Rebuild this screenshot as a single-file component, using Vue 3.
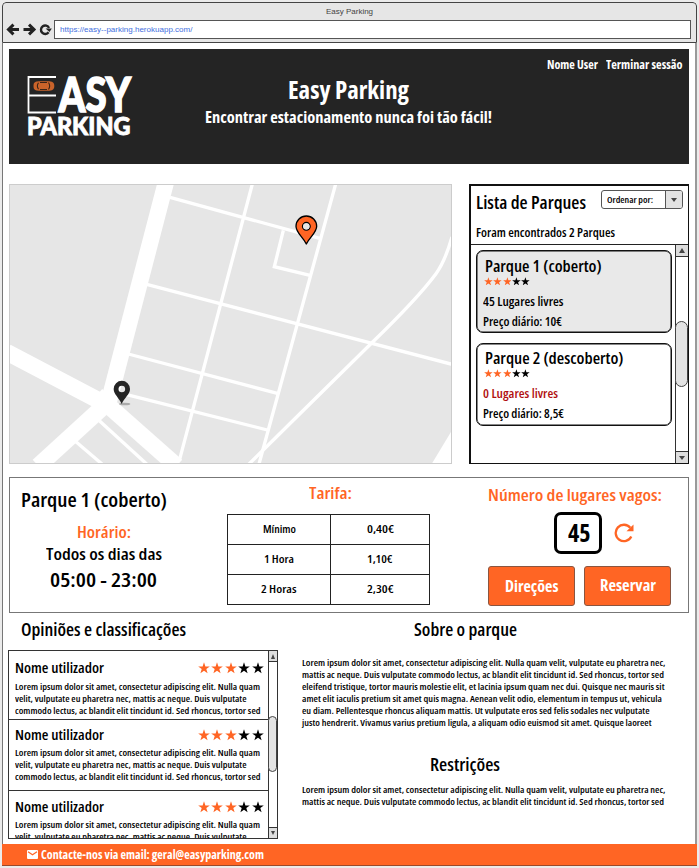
<script setup>
// Sets an element's text to a given measure by condensing its glyphs.
const vFit = {
  mounted(el, { value }) {
    const natural = el.getBoundingClientRect().width
    el.style.transform = `scaleX(${value / natural})`
    el.style.marginRight = `${value - natural}px`
  },
}

const star = 'M6 0.3 7.4 4.4 11.8 4.5 8.3 7.1 9.6 11.3 6 8.8 2.4 11.3 3.7 7.1 0.2 4.5 4.6 4.4Z'

const parks = [
  { name: 'Parque 1 (coberto)', nw: 116.5, free: '45 Lugares livres', fw: 80.5, price: 'Preço diário: 10€', pw: 79, active: true },
  { name: 'Parque 2 (descoberto)', nw: 138.5, free: '0 Lugares livres', fw: 75, price: 'Preço diário: 8,5€', pw: 81, full: true },
]

const fares = [
  ['Mínimo', 33, '0,40€', 27],
  ['1 Hora', 30, '1,10€', 25.5],
  ['2 Horas', 35.5, '2,30€', 26.5],
]

const reviewLines = [
  ['Lorem ipsum dolor sit amet, consectetur adipiscing elit. Nulla quam', 245],
  ['velit, vulputate eu pharetra nec, mattis ac neque. Duis vulputate', 231.5],
  ['commodo lectus, ac blandit elit tincidunt id. Sed rhoncus, tortor sed', 245.5],
]

const about = [
  ['Lorem ipsum dolor sit amet, consectetur adipiscing elit. Nulla quam velit, vulputate eu pharetra nec,', 363.5],
  ['mattis ac neque. Duis vulputate commodo lectus, ac blandit elit tincidunt id. Sed rhoncus, tortor sed', 362],
  ['eleifend tristique, tortor mauris molestie elit, et lacinia ipsum quam nec dui. Quisque nec mauris sit', 362.5],
  ['amet elit iaculis pretium sit amet quis magna. Aenean velit odio, elementum in tempus ut, vehicula', 360],
  ['eu diam. Pellentesque rhoncus aliquam mattis. Ut vulputate eros sed felis sodales nec vulputate', 347.5],
  ['justo hendrerit. Vivamus varius pretium ligula, a aliquam odio euismod sit amet. Quisque laoreet', 349.5],
]
</script>

<template>
  <div class="window">
    <div class="chrome">
      <div class="tab-title">Easy Parking</div>
      <div class="toolbar">
        <svg class="nav" width="46" height="14" viewBox="0 0 46 14" fill="none" stroke="#222" stroke-width="3">
          <path d="M13 6.500H3M7.500 1.700 2.500 6.500 7.500 11.300" />
          <path d="M17.500 6.500H27M23 1.700 28 6.500 23 11.300" />
          <path d="M42.600 9.200A4.200 4.200 0 1 1 43 5" stroke-width="2.400" />
          <path d="M39.600 5.500H45.800L43.500 9Z" fill="#222" stroke="none" />
        </svg>
        <div class="url"><span v-fit="132.5">https://easy--parking.herokuapp.com/</span></div>
      </div>
    </div>

    <div class="page">
      <header class="hero">
        <svg class="logo" width="108" height="64" viewBox="0 0 108 64">
          <path d="M30 2H2.500V37.500H30M2.500 20.500H30" fill="none" stroke="#fff" stroke-width="1.800" />
          <g fill="#c9632a">
            <path d="M12.500 6.500C8.500 6.300 7.500 8 7.500 11S8.500 15.700 12.500 15.500Z" />
            <path d="M23.500 6.500C27 6.300 28.300 8 28.300 11S27 15.700 23.500 15.500Z" />
            <rect x="11" y="6.200" width="14" height="9.600" rx="2" />
          </g>
          <path d="M12.500 7.800Q10.200 11 12.500 14.200M22.500 7.500Q24.800 11 22.500 14.500M14 7.500H21M14 14.500H21" fill="none" stroke="#3a2417" stroke-width="1.100" />
          <text x="32.500" y="37" font-size="48" textLength="72.500" lengthAdjust="spacingAndGlyphs" stroke-width="1.600">ASY</text>
          <text x="1" y="60" font-size="25.500" textLength="103.500" lengthAdjust="spacingAndGlyphs" stroke-width="0.900">PARKING</text>
        </svg>
        <div class="hero-text">
          <h1 v-fit="121">Easy Parking</h1>
          <p v-fit="287">Encontrar estacionamento nunca foi tão fácil!</p>
        </div>
        <nav class="account">
          <span v-fit="51">Nome User</span>
          <span v-fit="76.5">Terminar sessão</span>
        </nav>
      </header>

      <section class="finder">
        <svg class="map" width="443" height="280" viewBox="27 26 1329 840">
          <rect x="27" y="26" width="1329" height="840" fill="#e6e6e6" />
          <g fill="none" stroke="#fff" stroke-width="10">
            <path d="M498 20 326 680" stroke-width="49" />
            <path d="M20 530 320 688" stroke-width="50" />
            <path d="M290 660 530 872" stroke-width="50" />
            <path d="M325 680 115 872" stroke-width="50" />
            <path d="M510 66 962 190M757 26 538 856M1007 26 777 866" />
            <path d="M850 165 823 274 930 300M440 327 1356 567M385 536 832 654M380 658 802 764" />
            <path d="M298 736 440 866M226 798 306 866" />
            <path d="M1356 185Q1335 258 1308 295C1260 360 1190 430 1118 500C1010 605 870 745 745 868" />
          </g>
          <path d="M1356 765 1295 866H1356Z" fill="#fff" />
          <ellipse cx="374" cy="686" rx="17" ry="4" fill="#aaa" />
          <path fill-rule="evenodd" d="M365 686C357 667 341 657 341 641A24.500 24.500 0 0 1 390 641C390 657 373 667 365 686ZM365.500 631A10 10 0 1 0 365.500 651A10 10 0 0 0 365.500 631Z" fill="#242424" />
          <path fill-rule="evenodd" d="M919 206C908 184 888 172 888 153A31 31 0 0 1 950 153C950 172 930 184 919 206ZM919 141.500A11.500 11.500 0 1 0 919 164.500A11.500 11.500 0 0 0 919 141.500Z" fill="#ff6524" stroke="#000" stroke-width="4" stroke-linejoin="round" />
          <circle cx="919" cy="153" r="9.500" fill="#e6e6e6" />
          <rect x="28.500" y="27.500" width="1326" height="837" fill="none" stroke="#ccc" stroke-width="3" />
        </svg>

        <aside class="list">
          <div class="list-head">
            <div class="list-top">
              <h2 v-fit="110">Lista de Parques</h2>
              <div class="select">
                <span class="select-label"><span v-fit="46">Ordenar por:</span></span>
                <span class="select-arrow"><i class="down"></i></span>
              </div>
            </div>
            <p v-fit="139">Foram encontrados 2 Parques</p>
          </div>
          <div class="list-body">
            <div class="cards">
              <article v-for="p in parks" :key="p.name" class="card" :class="{ active: p.active }">
                <h3 v-fit="p.nw">{{ p.name }}</h3>
                <div class="stars small">
                  <svg v-for="n in 5" :key="n" viewBox="0 0 12 12" :class="{ on: n <= 3 }"><path :d="star" /></svg>
                </div>
                <p v-fit="p.fw" class="free" :class="{ full: p.full }">{{ p.free }}</p>
                <p v-fit="p.pw">{{ p.price }}</p>
              </article>
            </div>
            <div class="scroll">
              <span class="step"><i class="up"></i></span>
              <span class="track"><b class="thumb"></b></span>
              <span class="step"><i class="down"></i></span>
            </div>
          </div>
        </aside>
      </section>

      <section class="info">
        <div class="hours">
          <h2 v-fit="146">Parque 1 (coberto)</h2>
          <div class="hours-body">
            <h3 v-fit="54">Horário:</h3>
            <p v-fit="116" class="days">Todos os dias das</p>
            <p v-fit="107" class="time">05:00 - 23:00</p>
          </div>
        </div>
        <div class="fares">
          <h3 v-fit="43">Tarifa:</h3>
          <div class="table">
            <template v-for="f in fares" :key="f[0]">
              <div class="cell"><span v-fit="f[1]">{{ f[0] }}</span></div>
              <div class="cell"><span v-fit="f[3]">{{ f[2] }}</span></div>
            </template>
          </div>
        </div>
        <div class="spots">
          <h3 v-fit="174">Número de lugares vagos:</h3>
          <div class="count-row">
            <div class="count"><span v-fit="22.5">45</span></div>
            <svg width="20" height="20" viewBox="0 0 20 20">
              <path d="M17.300 13.500A8.200 8.200 0 1 1 16.300 4.800" fill="none" stroke="#ff6524" stroke-width="2.300" />
              <path d="M19.500 1.500V8.200H12.500Z" fill="#ff6524" />
            </svg>
          </div>
          <div class="buttons">
            <button><span v-fit="53.5">Direções</span></button>
            <button class="raised"><span v-fit="56">Reservar</span></button>
          </div>
        </div>
      </section>

      <section class="details">
        <div class="opinions">
          <h2 v-fit="165">Opiniões e classificações</h2>
          <div class="reviews">
            <div class="review-list">
              <article v-for="r in 3" :key="r" class="review">
                <div class="review-head">
                  <h3 v-fit="89">Nome utilizador</h3>
                  <div class="stars">
                    <svg v-for="n in 5" :key="n" viewBox="0 0 12 12" :class="{ on: n <= 3 }"><path :d="star" /></svg>
                  </div>
                </div>
                <p v-for="l in reviewLines.slice(0, r === 3 ? 2 : 3)" :key="l[0]" v-fit="l[1]" class="line">{{ l[0] }}</p>
              </article>
            </div>
            <div class="scroll thin">
              <span class="step"><i class="up"></i></span>
              <span class="track"><b class="thumb"></b></span>
              <span class="step"><i class="down"></i></span>
            </div>
          </div>
        </div>
        <div class="about">
          <h2 v-fit="103">Sobre o parque</h2>
          <div class="lines">
            <p v-for="l in about" :key="l[0]" v-fit="l[1]" class="line">{{ l[0] }}</p>
          </div>
          <h2 v-fit="70" class="rules">Restrições</h2>
          <div class="lines short">
            <p v-for="l in about.slice(0, 2)" :key="l[0]" v-fit="l[1]" class="line">{{ l[0] }}</p>
          </div>
        </div>
      </section>
    </div>

    <footer class="footer">
      <svg width="11" height="9" viewBox="0 0 11 9">
        <rect width="11" height="9" rx="1" fill="#fff" />
        <path d="M1 1.700 5.500 4.800 10 1.700" fill="none" stroke="#ff6524" stroke-width="1.200" />
      </svg>
      <span v-fit="223">Contacte-nos via email: geral@easyparking.com</span>
    </footer>
  </div>
</template>

<style>
body { background: #ebebeb; }
</style>

<style scoped>
* { box-sizing: border-box; margin: 0; }
.window {
  width: 695px; height: 864px; margin: 2px; margin-bottom: 0;
  display: flex; flex-direction: column;
  font-family: "Open Sans", "Noto Sans", sans-serif; font-stretch: 75%; font-weight: 600;
  color: #000; background: #fff; overflow: hidden;
  border-radius: 4px 4px 0 0;
}
h1, h2, h3, p, .window span { font-weight: inherit; white-space: nowrap; }
h1, h2, h3, p { width: max-content; transform-origin: left center; }
.window span { transform-origin: left center; flex: none; }
.chrome { height: 41px; background: #e6e6e6; border: 1.5px solid #444; border-radius: 4px 4px 0 0; flex: none; font-family: "Liberation Sans", sans-serif; font-weight: 400; }
.tab-title { height: 17px; line-height: 17px; font-size: 8px; color: #444; text-align: center; }
.toolbar { display: flex; align-items: center; padding: 0 5px 0 3px; gap: 2px; }
.nav { flex: none; }
.url { flex: 1; height: 19px; background: #fff; border: 1px solid #555; padding-left: 5px; display: flex; align-items: center; font-size: 8px; color: #3f6fe0; }
.page { flex: 1; min-height: 0; padding: 6px 7px 0; border-left: 1px solid #777; border-right: 2px solid #999; }
.hero { width: 680px; height: 115px; margin-left: -1px; background: #242424; color: #fff; display: grid; grid-template-columns: 196px 287px 1fr; }
.logo { margin: 26px 0 0 17px; overflow: visible; }
.logo text { font-family: Lato, sans-serif; font-weight: 900; fill: #fff; stroke: #fff; }
.hero-text { display: flex; flex-direction: column; align-items: center; padding-top: 24px; font-weight: 700; }
.hero-text h1 { font-size: 25px; line-height: 32px; }
.hero-text p { font-size: 16px; line-height: 24px; }
.account { display: flex; justify-content: flex-end; gap: 8px; padding: 6px 7px 0 0; font-size: 12.500px; line-height: 20px; font-weight: 700; }
.finder { display: flex; justify-content: space-between; width: 680px; margin: 20px 0 0 -1px; }
.map { flex: none; }
.list { width: 220px; height: 280px; border: 1px solid #111; border-left-width: 2px; border-top-width: 2px; display: flex; flex-direction: column; }
.list-head { height: 59px; padding: 4px 5px 0; border-bottom: 1.500px solid #222; }
.list-top { display: flex; justify-content: space-between; }
.list-top h2 { font-size: 17px; line-height: 25px; }
.list-head p { font-size: 12px; line-height: 16px; margin-top: 10px; }
.select { width: 82px; height: 19px; border: 1px solid #555; border-radius: 3px; display: flex; overflow: hidden; font-size: 8.500px; }
.select-label { flex: 1 !important; padding-left: 5px; display: flex; align-items: center; }
.select-arrow { width: 17px; background: #e2e2e2; border-left: 1px solid #555; display: flex; align-items: center; justify-content: center; }
.down { border: 3px solid transparent; border-top: 4.500px solid #444; border-bottom: 0; }
.up { border: 3px solid transparent; border-bottom: 5px solid #444; border-top: 0; }
.list-body { flex: 1; min-height: 0; display: flex; }
.cards { flex: 1; padding: 5px 3px 0 5px; display: flex; flex-direction: column; gap: 9.500px; }
.card { height: 83px; border: 1.500px solid #111; border-radius: 7px; padding: 4.500px 0 0 5.500px; box-shadow: inset 0 0 0 0.500px #111; }
.card.active { background: #e9e9e9; }
.card h3 { font-size: 16px; line-height: 21px; margin-left: 2.500px; }
.card p { font-size: 12px; line-height: 20px; }
.card .free { margin-top: 7px; }
.card .full { color: #b10f10; }
.stars { display: flex; gap: 1.500px; }
.stars svg { width: 12px; height: 12px; fill: #000; }
.stars .on { fill: #ff6524; }
.stars.small { gap: 0.500px; margin-left: 1.500px; }
.stars.small svg { width: 8.800px; height: 8.800px; margin-bottom: -0.800px; }
.scroll { width: 13px; border-left: 1px solid #333; display: flex; flex-direction: column; background: #fff; }
.step { height: 12px; background: #ddd; border-bottom: 1px solid #333; display: flex; align-items: center; justify-content: center; }
.step:last-child { border-bottom: 0; border-top: 1px solid #333; }
.track { flex: 1 !important; padding-top: 64px; }
.thumb { display: block; height: 66px; background: #e4e4e4; border: 1px solid #444; border-radius: 7px; margin-left: -1px; }
.info { width: 680px; height: 136px; margin: 13px 0 0 -1px; border: 1px solid #777; display: grid; grid-template-columns: 217px 203px 1fr; }
.info h3 { color: #ff6524; font-size: 16.500px; line-height: 22px; }
.hours { padding: 8px 0 0 11px; }
.hours h2 { font-size: 20.500px; line-height: 27px; }
.hours-body { width: 165px; display: flex; flex-direction: column; align-items: center; padding-top: 8px; }
.days { font-size: 16.500px; line-height: 22px; }
.time { font-size: 20px; line-height: 29px; }
.fares { display: flex; flex-direction: column; padding-top: 4px; }
.fares h3 { margin-left: 82px; }
.table { width: 203px; margin-top: 10px; display: grid; grid-template-columns: 103px 99px; border: 1px solid #222; border-width: 1px 0 0 1px; }
.cell { height: 30px; display: flex; align-items: center; justify-content: center; border: 1px solid #222; border-width: 0 1px 1px 0; font-size: 11.500px; padding-bottom: 2px; }
.spots { padding: 6px 0 0 58px; }
.count-row { display: flex; align-items: center; gap: 12px; margin: 6px 0 0 66px; }
.count { width: 48px; height: 42px; border: 3px solid #000; border-radius: 7px; display: flex; align-items: center; justify-content: center; font-size: 24px; font-weight: 700; padding: 0 0 1px 2px; }
.buttons { display: flex; gap: 9px; margin-top: 12px; }
button { width: 87px; height: 40px; padding: 0 0 2px; background: #ff6524; color: #fff; border: 1px solid #8a5540; border-radius: 3px; font: inherit; font-weight: 700; font-size: 16.500px; display: flex; align-items: center; justify-content: center; }
.raised { margin-top: -0.500px; }
.details { display: flex; margin-left: -2px; }
.details h2 { font-size: 17px; line-height: 24px; }
.opinions { width: 270px; padding-top: 5px; }
.opinions h2 { margin-left: 12.500px; }
.reviews { height: 189px; margin-top: 8px; border: 1px solid #333; display: flex; overflow: hidden; }
.review-list { flex: 1; min-width: 0; overflow: hidden; }
.review { height: 71px; padding: 5px 0 0 6px; border-bottom: 1px solid #333; }
.review:first-child { height: 69px; padding-top: 7px; }
.review-head { display: flex; justify-content: space-between; align-items: center; height: 20px; padding-right: 4.500px; margin-bottom: 3px; }
.review:nth-child(2) .review-head { margin-bottom: 2px; }
.review:last-child { padding-top: 6px; }
.review:last-child .review-head { margin-bottom: 2px; }
.review h3 { font-size: 14.500px; line-height: 20px; }
.line { font-size: 9px; line-height: 12px; }
.scroll.thin { width: 9px; }
.thin .step { height: 11px; }
.thin .track { padding-top: 54px; }
.thin .thumb { height: 56px; }
.thin .up, .thin .down { border-left-width: 2.500px; border-right-width: 2.500px; }
.about { padding: 5px 0 0 23.500px; }
.about h2 { margin-left: 112px; }
.lines { padding-top: 15px; }
.about .rules { margin: 24px 0 0 128.500px; }
.lines.short { padding-top: 7px; }
.footer { height: 22px; margin-right: -2px; flex: none; background: #ff6524; color: #fff; border-bottom: 1px solid #9b4a2a; display: flex; align-items: center; gap: 2.500px; padding-left: 25px; font-size: 12px; font-weight: 700; }
</style>
